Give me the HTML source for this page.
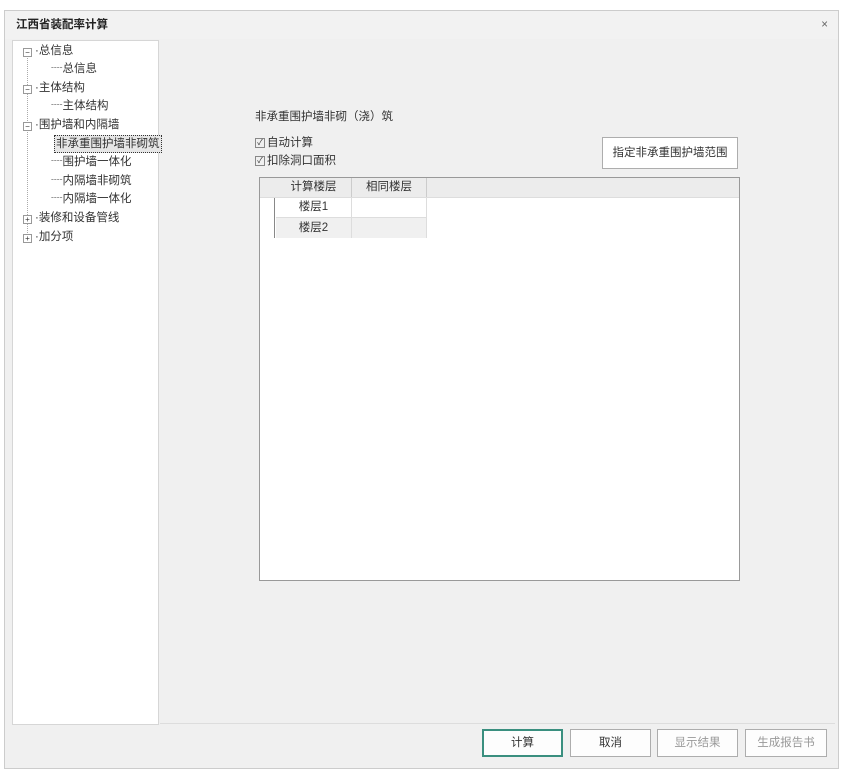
<!DOCTYPE html>
<html><head><style>
body{margin:0;width:841px;height:775px;background:#fff;font-family:"Liberation Sans","Noto Sans CJK SC",sans-serif;font-size:11.5px;color:#333;position:relative;overflow:hidden}
.a{position:absolute}
.win{left:4px;top:10px;width:833px;height:757px;border:1px solid #ccc;background:#f0f0f0}
.title{left:0;top:0;width:833px;height:28px;background:#f2f2f2;font-weight:bold;font-size:11.5px;line-height:28px;text-indent:11px;color:#222}
.tree{left:7px;top:29px;width:145px;height:683px;background:#fff;border:1px solid #d6d6d6}
.ti{position:absolute;white-space:nowrap;line-height:18px}
.box{position:absolute;width:7px;height:7px;border:1px solid #999;background:#fff;font-size:8px;line-height:7px;text-align:center;color:#333}
.btn{position:absolute;top:718px;height:26px;border:1px solid #adadad;background:#fdfdfd;text-align:center;line-height:26px}
.cb{display:inline-block;width:8px;height:8px;border:1px solid #888;font-size:8px;line-height:8px;text-align:center;vertical-align:middle;margin-right:2px;color:#333}
</style></head><body>
<div class="a win">
 <div class="a title">江西省装配率计算<span style="position:absolute;right:10px;font-weight:normal;color:#666">×</span></div>
 <div class="a tree">
  <div class="a" style="left:14px;top:12px;height:190px;border-left:1px dotted #aaa"></div>
  <div class="box" style="left:10px;top:7px">−</div><div class="ti" style="left:22px;top:1px">·总信息</div>
  <div class="ti" style="left:38px;top:19px">┈总信息</div>
  <div class="box" style="left:10px;top:44px">−</div><div class="ti" style="left:22px;top:38px">·主体结构</div>
  <div class="ti" style="left:38px;top:56px">┈主体结构</div>
  <div class="box" style="left:10px;top:81px">−</div><div class="ti" style="left:22px;top:75px">·围护墙和内隔墙</div>
  <div class="ti" style="left:41px;top:94px;border:1px dotted #333;background:#e6e6e6;padding:0 1px;line-height:16px">非承重围护墙非砌筑</div>
  <div class="ti" style="left:38px;top:112px">┈围护墙一体化</div>
  <div class="ti" style="left:38px;top:131px">┈内隔墙非砌筑</div>
  <div class="ti" style="left:38px;top:149px">┈内隔墙一体化</div>
  <div class="box" style="left:10px;top:174px">+</div><div class="ti" style="left:22px;top:168px">·装修和设备管线</div>
  <div class="box" style="left:10px;top:193px">+</div><div class="ti" style="left:22px;top:187px">·加分项</div>
 </div>
 <div class="a" style="left:250px;top:97px">非承重围护墙非砌（浇）筑</div>
 <div class="a" style="left:250px;top:123px"><span class="cb">✓</span>自动计算</div>
 <div class="a" style="left:250px;top:141px"><span class="cb">✓</span>扣除洞口面积</div>
 <div class="a" style="left:597px;top:126px;width:134px;height:30px;border:1px solid #adadad;background:#fff;text-align:center;line-height:30px">指定非承重围护墙范围</div>
 <div class="a" style="left:254px;top:166px;width:479px;height:402px;border:1px solid #999;background:#fff">
  <div class="a" style="left:0;top:0;width:479px;height:19px;background:#ececec;border-bottom:1px solid #ddd"></div>
  <div class="a" style="left:16px;top:0;width:75px;height:19px;line-height:19px;text-align:center;border-right:1px solid #ccc">计算楼层</div>
  <div class="a" style="left:92px;top:0;width:74px;height:19px;line-height:19px;text-align:center;border-right:1px solid #ccc">相同楼层</div>
  <div class="a" style="left:14px;top:20px;width:1px;height:40px;background:#888"></div>
  <div class="a" style="left:16px;top:20px;width:75px;height:19px;line-height:19px;text-align:center;border-right:1px solid #ddd;border-bottom:1px solid #ddd">楼层1</div>
  <div class="a" style="left:92px;top:20px;width:74px;height:19px;border-right:1px solid #ddd;border-bottom:1px solid #ddd"></div>
  <div class="a" style="left:16px;top:40px;width:75px;height:20px;line-height:20px;text-align:center;background:#f0f0f0;border-right:1px solid #ddd">楼层2</div>
  <div class="a" style="left:92px;top:40px;width:74px;height:20px;background:#f0f0f0;border-right:1px solid #ddd"></div>
 </div>
 <div class="a" style="left:155px;top:712px;width:675px;height:1px;background:#ddd"></div>
 <div class="btn" style="left:477px;width:77px;border:2px solid #3a8f7f;height:24px;line-height:24px">计算</div>
 <div class="btn" style="left:565px;width:79px">取消</div>
 <div class="btn" style="left:652px;width:79px;color:#999">显示结果</div>
 <div class="btn" style="left:740px;width:80px;color:#999">生成报告书</div>
</div>
</body></html>
